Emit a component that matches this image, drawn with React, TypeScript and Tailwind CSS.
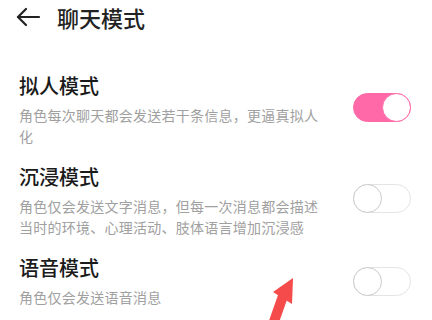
import { useState } from 'react';

type Mode = {
  title: string;
  desc: string;
  on: boolean;
};

const modes: Mode[] = [
  { title: '拟人模式', desc: '角色每次聊天都会发送若干条信息，更逼真拟人化', on: true },
  { title: '沉浸模式', desc: '角色仅会发送文字消息，但每一次消息都会描述当时的环境、心理活动、肢体语言增加沉浸感', on: false },
  { title: '语音模式', desc: '角色仅会发送语音消息', on: false },
];

function Toggle({ on, onClick }: { on: boolean; onClick: () => void }) {
  return (
    <button
      onClick={onClick}
      className={`relative h-[29px] w-[58px] shrink-0 rounded-full border ${
        on ? 'border-[#ff69a8] bg-[#ff69a8]' : 'border-[#e4e4e4] bg-white'
      }`}
    >
      <span
        className={`absolute top-[-1px] h-[29px] w-[29px] rounded-full bg-white border ${
          on ? 'right-[-1px] border-[#ff69a8]' : 'left-[-1px] border-[#c9c9c9] border-[1.5px]'
        }`}
      />
    </button>
  );
}

export default function App() {
  const [state, setState] = useState(modes.map((m) => m.on));

  return (
    <div
      className="relative h-[320px] w-[432px] overflow-hidden bg-white"
      style={{ fontFamily: '"Noto Sans CJK SC", "Noto Sans", sans-serif' }}
    >
      {/* Header */}
      <div className="flex h-[34px] items-center pl-[16px]">
        <svg width="25" height="20" viewBox="0 0 25 20" fill="none" stroke="#222" strokeWidth="2.2" strokeLinecap="round" strokeLinejoin="round">
          <path d="M2 10 H23" />
          <path d="M10 2 L2 10 L10 18" />
        </svg>
        <h1 className="ml-[16px] text-[22px] font-medium leading-[28px] text-[#222]">聊天模式</h1>
      </div>

      {/* Mode list */}
      <div className="mt-[38px] flex flex-col gap-[16px]">
        {modes.map((m, i) => (
          <div key={m.title} className="flex items-center justify-between pl-[19px] pr-[21px]">
            <div className="w-[306px]">
              <div className="text-[20px] font-medium leading-[28px] text-[#1a1a1a]">{m.title}</div>
              <p className="mt-[5px] text-[14px] leading-[21px] tracking-[0.25px] text-[#a0a0a0]">{m.desc}</p>
            </div>
            <div className={i === 2 ? 'mt-[5px]' : ''}>
              <Toggle on={state[i]} onClick={() => setState((s) => s.map((v, j) => (j === i ? !v : v)))} />
            </div>
          </div>
        ))}
      </div>

      {/* Annotation arrow */}
      <svg className="pointer-events-none absolute left-0 top-0" width="432" height="320" viewBox="0 0 432 320">
        <path d="M283 296 L271 330" stroke="#f54b4b" strokeWidth="10" />
        <polygon points="293,278 273,292 292,304" fill="#f54b4b" />
      </svg>
    </div>
  );
}
